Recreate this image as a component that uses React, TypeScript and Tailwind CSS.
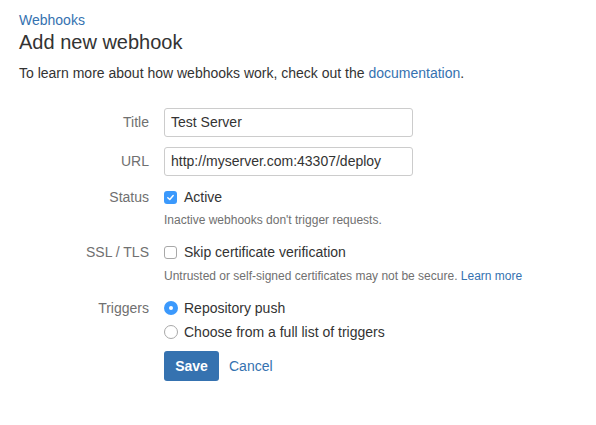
import React from 'react';

const labelCls = 'w-[130px] shrink-0 text-right text-[14px] text-[#707070]';

function CheckBox({ checked }: { checked?: boolean }) {
  if (checked) {
    return (
      <span className="flex h-[13px] w-[13px] items-center justify-center rounded-[3px] bg-[#3b99fc]">
        <svg width="9" height="9" viewBox="0 0 10 10" fill="none">
          <path d="M2 5.2 L4.2 7.3 L8 2.8" stroke="white" strokeWidth="1.6" strokeLinecap="round" strokeLinejoin="round" />
        </svg>
      </span>
    );
  }
  return <span className="block h-[13px] w-[13px] rounded-[3px] border border-[#a8a8a8] bg-white" />;
}

function Radio({ checked }: { checked?: boolean }) {
  if (checked) {
    return (
      <span className="flex h-[14px] w-[14px] items-center justify-center rounded-full bg-[#3b99fc]">
        <span className="block h-[4px] w-[4px] rounded-full bg-white" />
      </span>
    );
  }
  return <span className="block h-[14px] w-[14px] rounded-full border border-[#a8a8a8] bg-white" />;
}

export default function App() {
  return (
    <div className="min-h-[425px] w-[596px] bg-white px-[19px] pt-[10px] text-[#333] [font-family:'Liberation_Sans',Arial,sans-serif]">
      {/* Header */}
      <a href="#" className="block text-[14px] leading-[20px] text-[#3572b0]">Webhooks</a>
      <h1 className="-mt-[2px] text-[20px] leading-[28px] text-[#333]">Add new webhook</h1>
      <p className="mt-[7px] text-[14px] leading-[20px]">
        To learn more about how webhooks work, check out the{' '}
        <a href="#" className="text-[#3572b0]">documentation</a>.
      </p>

      {/* Form */}
      <div className="mt-[25px] flex flex-col">
        <div className="flex items-center gap-[15px]">
          <label className={labelCls}>Title</label>
          <div className="flex h-[29px] w-[249px] items-center rounded-[3px] border border-[#cccccc] px-[6px] text-[14px]">
            Test Server
          </div>
        </div>
        <div className="mt-[10px] flex items-center gap-[15px]">
          <label className={labelCls}>URL</label>
          <div className="flex h-[29px] w-[249px] items-center rounded-[3px] border border-[#cccccc] px-[6px] text-[14px]">
            http://myserver.com:43307/deploy
          </div>
        </div>

        <div className="mt-[11px] flex items-center gap-[15px] leading-[20px]">
          <label className={labelCls}>Status</label>
          <div className="flex items-center gap-[7px] text-[14px]">
            <CheckBox checked />
            <span>Active</span>
          </div>
        </div>
        <div className="ml-[145px] mt-[5px] text-[12px] leading-[16px] text-[#707070]">
          Inactive webhooks don't trigger requests.
        </div>

        <div className="mt-[14px] flex items-center gap-[15px] leading-[20px]">
          <label className={labelCls}>SSL / TLS</label>
          <div className="flex items-center gap-[7px] text-[14px]">
            <CheckBox />
            <span>Skip certificate verification</span>
          </div>
        </div>
        <div className="ml-[145px] mt-[6px] text-[12px] leading-[16px] text-[#707070]">
          Untrusted or self-signed certificates may not be secure.{' '}
          <a href="#" className="text-[#3572b0]">Learn more</a>
        </div>

        <div className="mt-[14px] flex items-center gap-[15px] leading-[20px]">
          <label className={labelCls}>Triggers</label>
          <div className="flex items-center gap-[6px] text-[14px]">
            <Radio checked />
            <span>Repository push</span>
          </div>
        </div>
        <div className="ml-[145px] mt-[4px] flex items-center gap-[6px] text-[14px] leading-[20px]">
          <Radio />
          <span>Choose from a full list of triggers</span>
        </div>

        <div className="ml-[145px] mt-[9px] flex items-center gap-[10px]">
          <button className="h-[30px] w-[55px] rounded-[3px] bg-[#3572b0] text-[14px] font-bold text-white">
            Save
          </button>
          <a href="#" className="text-[14px] text-[#3572b0]">Cancel</a>
        </div>
      </div>
    </div>
  );
}
